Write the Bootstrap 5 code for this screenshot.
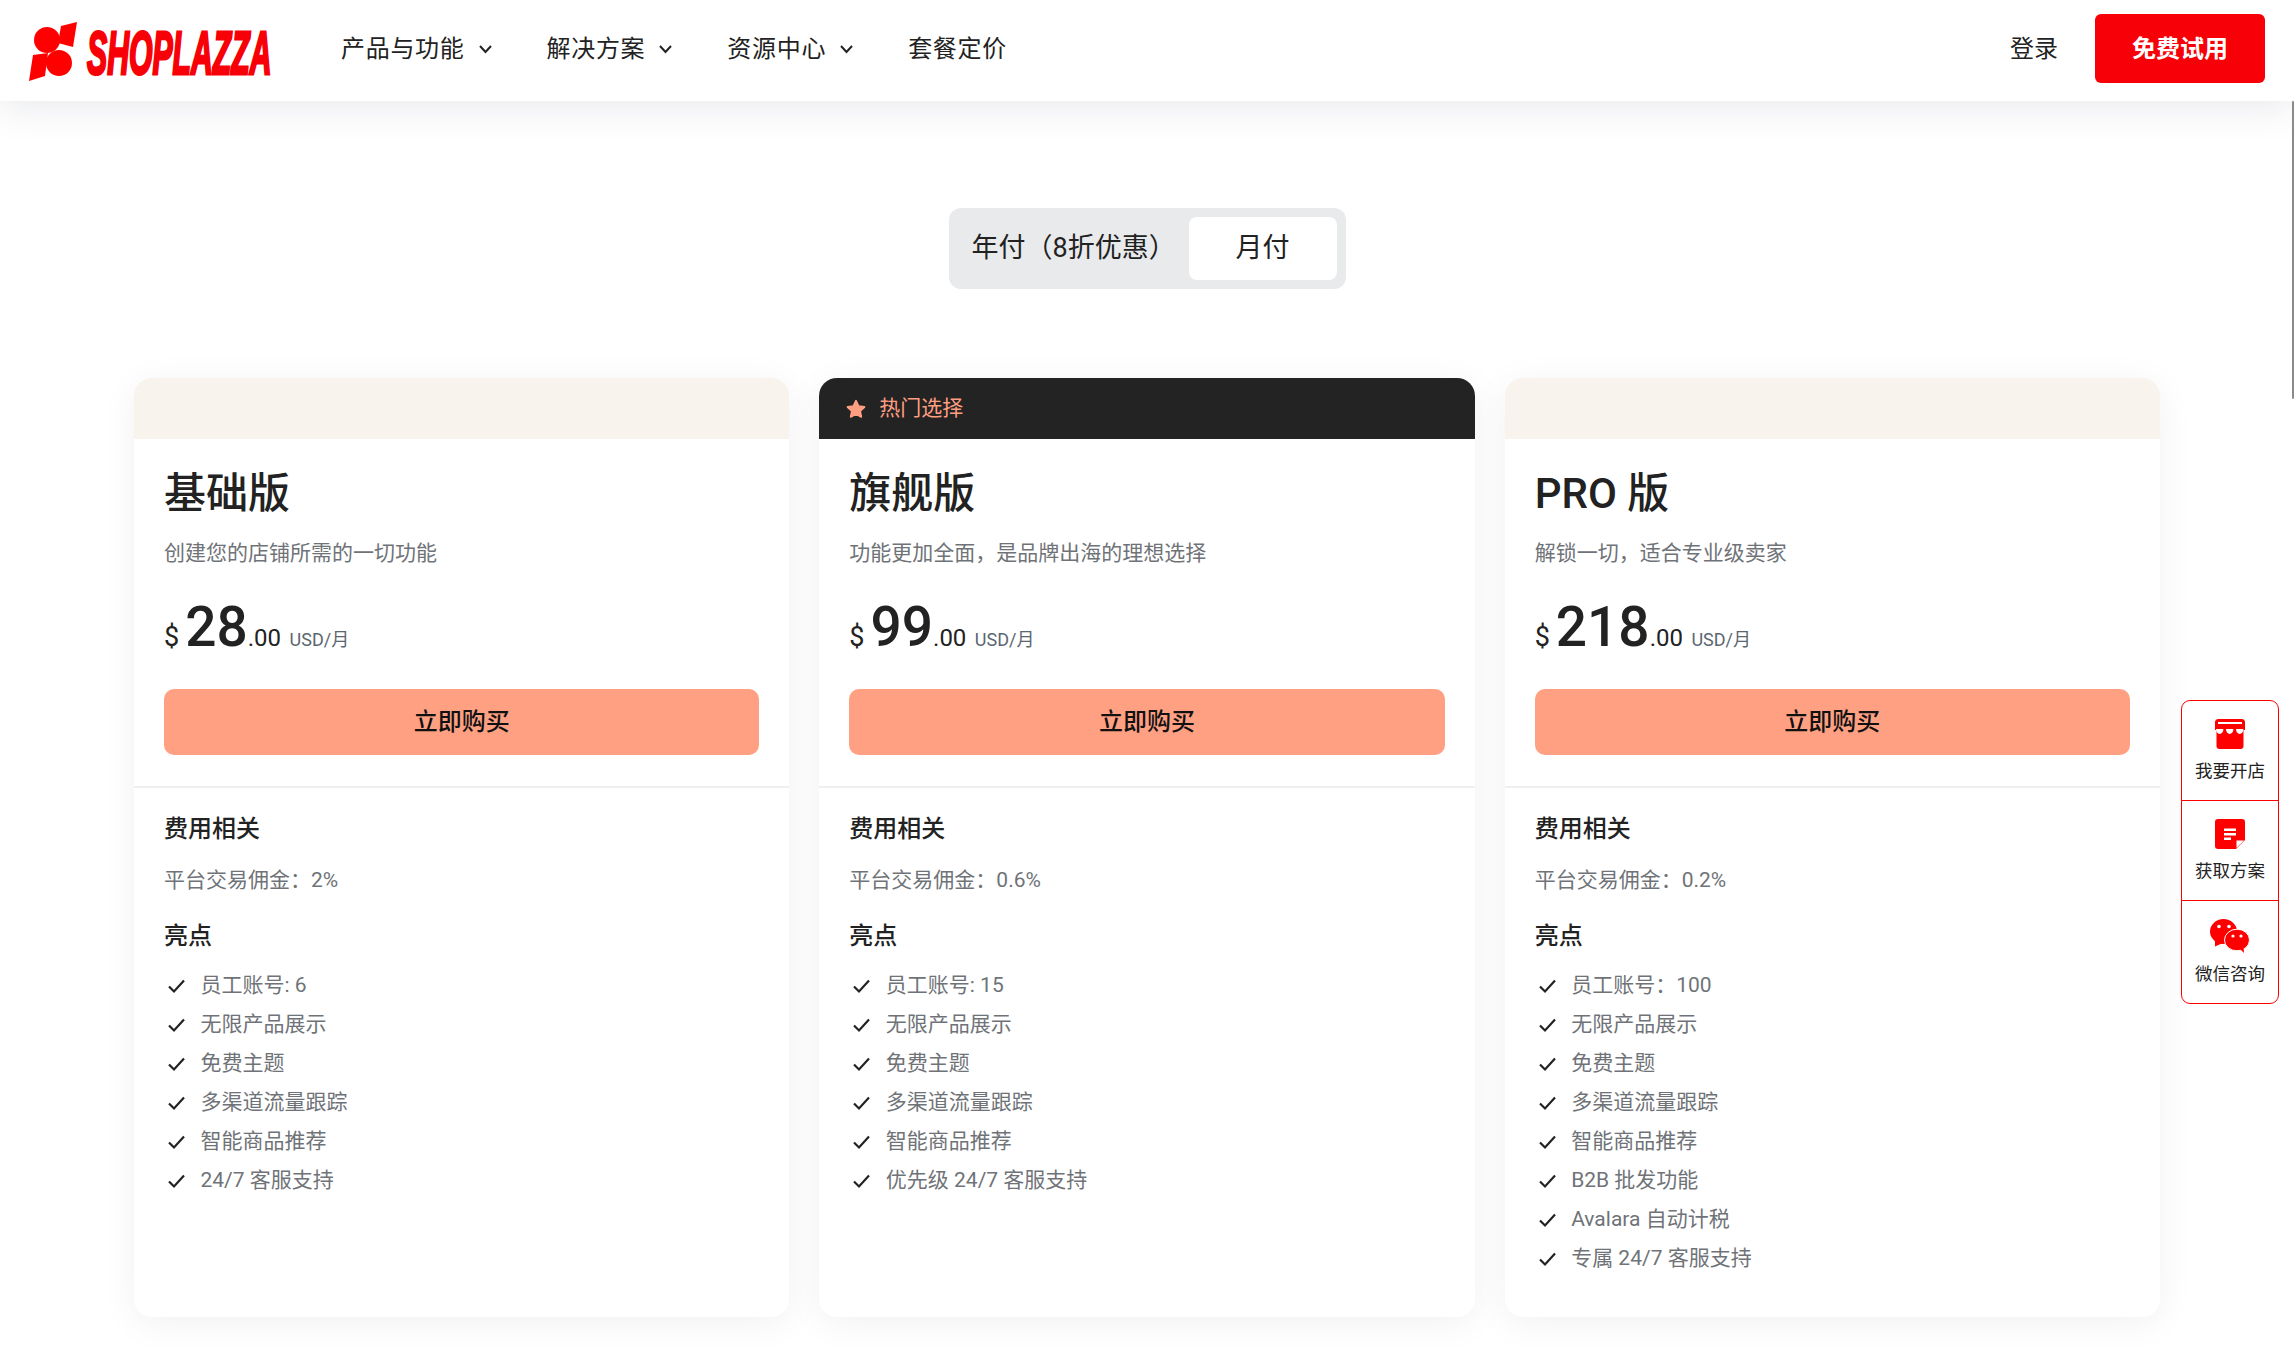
<!DOCTYPE html>
<html lang="zh-CN">

<head>
    <meta charset="UTF-8" />
    <meta name="viewport" content="width=device-width, initial-scale=1" />
    <title>套餐定价 | SHOPLAZZA</title>
    <link href="https://cdn.jsdelivr.net/npm/bootstrap@5.3.2/dist/css/bootstrap.min.css" rel="stylesheet" />
    <style>
        :root {
            --brand-red: #f70007;
            --peach: #ffa083;
            --ink: #222222;
            --muted: #6f7378;
        }

        html,
        body {
            height: 1350px;
            overflow: hidden;
        }

        body {
            font-family: Roboto, "Noto Sans CJK SC", sans-serif;
            color: var(--ink);
            background: #fff;
        }

        .top-bar {
            height: 101px;
            padding: 0 29px 4px;
            background: #fff;
            box-shadow: 0 4px 40px rgba(40, 50, 80, 0.12);
            position: relative;
            z-index: 5;
        }

        .brand-svg {
            width: 244px;
            height: 60px;
            display: block;
            margin-top: 4px;
            overflow: visible;
        }

        .brand-word {
            font-family: "Liberation Sans", sans-serif;
            font-weight: 700;
            font-style: italic;
            font-size: 62px;
            fill: #f70007;
            stroke: #f70007;
            stroke-width: 3px;
        }

        .main-links {
            margin-left: 68px;
            gap: 54px;
        }

        .main-links .nav-link {
            color: var(--ink);
            font-size: 24px;
            letter-spacing: 0.7px;
            padding: 0;
            display: flex;
            align-items: center;
            gap: 13px;
        }

        .chev {
            width: 15px;
            height: 10px;
        }

        .login-link {
            color: var(--ink);
            font-size: 24px;
            text-decoration: none;
            margin-right: 37px;
        }

        .trial-btn {
            width: 170px;
            height: 69px;
            background: var(--brand-red);
            border: 0;
            border-radius: 6px;
            color: #fff;
            font-size: 24px;
            font-weight: 700;
        }

        .billing-wrap {
            padding-top: 107px;
        }

        .billing-switch {
            width: 397px;
            height: 81px;
            background: #e9eaec;
            border-radius: 12px;
            padding: 9px;
            font-size: 27px;
        }

        .billing-year {
            padding-left: 14px;
            width: 231px;
            white-space: nowrap;
        }

        .billing-month {
            width: 148px;
            height: 63px;
            background: #fff;
            border-radius: 8px;
        }

        .plans {
            width: 2026px;
            margin: 89px auto 0;
        }

        .plans .row {
            --bs-gutter-x: 30px;
        }

        .plan-card {
            height: 939px;
            border: 0;
            border-radius: 18px;
            overflow: hidden;
            box-shadow: 0 6px 36px rgba(0, 0, 0, 0.06);
        }

        .plan-head {
            height: 61px;
            padding: 0 26px;
            background: #f8f3ed;
            border: 0;
            border-radius: 0;
            font-size: 21px;
            display: flex;
            align-items: center;
            gap: 12px;
        }

        .plan-head.is-hot {
            background: #232323;
            color: #ff9e80;
        }

        .star-ico {
            width: 22px;
            height: 22px;
        }

        .plan-top {
            padding: 26px 30px 31px;
        }

        .plan-name {
            font-size: 42px;
            line-height: 58px;
            font-weight: 500;
            margin: 0;
        }

        .plan-desc {
            color: var(--muted);
            font-size: 21px;
            line-height: 30px;
            margin: 15px 0 0;
        }

        .price-line {
            margin-top: 23px;
            height: 72px;
            line-height: 72px;
            white-space: nowrap;
        }

        .price-cur {
            font-size: 27px;
            margin-right: 6px;
        }

        .price-big {
            font-size: 55px;
            font-weight: 500;
        }

        .price-cents {
            font-size: 24px;
        }

        .price-unit {
            font-size: 18px;
            color: #5b6670;
            margin-left: 8.5px;
        }

        .buy-btn {
            width: 100%;
            height: 66px;
            margin-top: 26px;
            background: var(--peach);
            border: 0;
            border-radius: 10px;
            color: #111;
            font-size: 24px;
            font-weight: 500;
        }

        .plan-rest {
            border-top: 2px solid #eeeff1;
            padding: 24px 30px 0;
        }

        .sect-title {
            font-size: 24px;
            line-height: 34px;
            font-weight: 500;
            margin: 0;
        }

        .fee-line {
            color: var(--muted);
            font-size: 21px;
            line-height: 30px;
            margin: 19px 0 24px;
        }

        .perk-list {
            list-style: none;
            margin: 13px 0 0;
            padding: 0;
        }

        .perk-list li {
            height: 39px;
            display: flex;
            align-items: center;
            gap: 14.5px;
            color: var(--muted);
            font-size: 21px;
            padding-left: 3px;
        }

        .tick {
            width: 19px;
            height: 16px;
            flex: none;
        }

        .side-dock {
            position: fixed;
            left: 2181px;
            top: 700px;
            width: 98px;
            background: #fff;
            border: 1px solid #ff0000;
            border-radius: 9px;
            z-index: 10;
        }

        .dock-item {
            height: 100px;
            font-size: 17.5px;
            color: var(--ink);
        }

        .dock-item:first-child {
            height: 99px;
        }

        .dock-item:last-child {
            height: 103px;
        }

        .dock-item+.dock-item {
            border-top: 1px solid #ff0000;
        }

        .dock-item svg {
            width: 40px;
            height: 34px;
        }

        .fake-scroll {
            position: fixed;
            right: 0;
            top: 101px;
            width: 2px;
            height: 298px;
            background: #8b8b8b;
            border-radius: 2px;
            z-index: 6;
        }
    </style>
</head>

<body>

    <!-- 顶部导航 -->
    <nav class="navbar top-bar d-flex align-items-center flex-nowrap">
        <a href="#" class="d-block">
            <svg class="brand-svg" viewBox="29 18 244 60" role="img" aria-label="SHOPLAZZA">
                <g fill="#ff0000">
                    <circle cx="47" cy="37" r="13" />
                    <circle cx="59" cy="60" r="13" />
                    <polygon points="61,23 77,19 73,44 58,40" />
                    <polygon points="33,52 48,50 45,73 29,78" />
                </g>
                <text class="brand-word" transform="translate(87 71) scale(0.487 1)">SHOPLAZZA</text>
            </svg>
        </a>
        <ul class="nav main-links flex-nowrap me-auto">
            <li class="nav-item"><a class="nav-link" href="#">产品与功能
                    <svg class="chev" viewBox="0 0 15 10"><path d="M2 2l5.5 6L13 2" fill="none" stroke="#222" stroke-width="2" /></svg></a></li>
            <li class="nav-item"><a class="nav-link" href="#">解决方案
                    <svg class="chev" viewBox="0 0 15 10"><path d="M2 2l5.5 6L13 2" fill="none" stroke="#222" stroke-width="2" /></svg></a></li>
            <li class="nav-item"><a class="nav-link" href="#">资源中心
                    <svg class="chev" viewBox="0 0 15 10"><path d="M2 2l5.5 6L13 2" fill="none" stroke="#222" stroke-width="2" /></svg></a></li>
            <li class="nav-item"><a class="nav-link" href="#">套餐定价</a></li>
        </ul>
        <a class="login-link" href="#">登录</a>
        <button class="btn trial-btn" type="button">免费试用</button>
    </nav>

    <!-- 年付 / 月付 -->
    <div class="billing-wrap d-flex justify-content-center">
        <div class="billing-switch d-flex align-items-center">
            <div class="billing-year">年付（8折优惠）</div>
            <div class="billing-month d-flex align-items-center justify-content-center">月付</div>
        </div>
    </div>

    <!-- 套餐 -->
    <div class="plans">
        <div class="row" id="planRow"></div>
    </div>

    <!-- 右侧悬浮 -->
    <div class="side-dock">
        <div class="dock-item d-flex flex-column align-items-center justify-content-end pb-3">
            <svg viewBox="0 0 40 34" class="mb-2">
                <path fill="#ff0000" d="M8 3h24a3 3 0 0 1 3 2.5V14H5V5.5A3 3 0 0 1 8 3zM6.5 14h27v16a3 3 0 0 1-3 3h-21a3 3 0 0 1-3-3z" />
                <rect x="8" y="6" width="24" height="2" fill="#fff" />
                <path fill="#fff" d="M6 13h7.4a3.7 5 0 0 1-7.4 0zM16 13h7.4a3.7 5 0 0 1-7.4 0zM26 13h7.4a3.7 5 0 0 1-7.4 0z" />
            </svg>
            <span>我要开店</span>
        </div>
        <div class="dock-item d-flex flex-column align-items-center justify-content-end pb-3">
            <svg viewBox="0 0 40 34" class="mb-2">
                <path fill="#ff0000" d="M8 3h24a3 3 0 0 1 3 3v18l-9 9H8a3 3 0 0 1-3-3V6a3 3 0 0 1 3-3z" />
                <path fill="#fff" d="M14 12.5h12v2.4H14zM14 17h12v2.4H14zM14 21.5h7v2.4h-7zM26.5 24.5h7.5l-7.5 7.5z" />
            </svg>
            <span>获取方案</span>
        </div>
        <div class="dock-item d-flex flex-column align-items-center justify-content-end pb-3">
            <svg viewBox="0 0 40 34" class="mb-2">
                <ellipse cx="13.5" cy="12.5" rx="13.5" ry="12.5" fill="#ff0000" />
                <path fill="#ff0000" d="M5 21l0 6.5 8-3.5z" />
                <circle cx="9" cy="7.5" r="1.8" fill="#fff" />
                <circle cx="19" cy="7.5" r="1.8" fill="#fff" />
                <ellipse cx="27" cy="21" rx="12.5" ry="10.8" fill="#ff0000" stroke="#fff" stroke-width="1" />
                <path fill="#ff0000" d="M30 30l4 4-.5-6z" />
                <circle cx="23" cy="17" r="1.6" fill="#fff" />
                <circle cx="31" cy="17" r="1.6" fill="#fff" />
            </svg>
            <span>微信咨询</span>
        </div>
    </div>

    <div class="fake-scroll"></div>

    <script src="https://cdn.jsdelivr.net/npm/bootstrap@5.3.2/dist/js/bootstrap.bundle.min.js"></script>
    <script>
        const plans = [
            {
                name: "基础版", desc: "创建您的店铺所需的一切功能", price: "28", fee: "2%",
                perks: ["员工账号: 6", "无限产品展示", "免费主题", "多渠道流量跟踪", "智能商品推荐", "24/7 客服支持"]
            },
            {
                name: "旗舰版", desc: "功能更加全面，是品牌出海的理想选择", price: "99", fee: "0.6%", hot: true,
                perks: ["员工账号: 15", "无限产品展示", "免费主题", "多渠道流量跟踪", "智能商品推荐", "优先级 24/7 客服支持"]
            },
            {
                name: "PRO 版", desc: "解锁一切，适合专业级卖家", price: "218", fee: "0.2%",
                perks: ["员工账号：100", "无限产品展示", "免费主题", "多渠道流量跟踪", "智能商品推荐", "B2B 批发功能", "Avalara 自动计税", "专属 24/7 客服支持"]
            }
        ];

        const tick = '<svg class="tick" viewBox="0 0 19 16"><path d="M2 8.5l5 5L17 2.5" fill="none" stroke="#222" stroke-width="2.2" /></svg>';
        const star = '<svg class="star-ico" viewBox="0 0 24 24"><path fill="#ff9e80" stroke="#ff9e80" stroke-width="2" stroke-linejoin="round" d="M12 3l2.8 6 6.4.8-4.7 4.4 1.2 6.4L12 17.4l-5.7 3.2 1.2-6.4-4.7-4.4 6.4-.8z" /></svg>';

        document.getElementById("planRow").innerHTML = plans.map((p) => `
            <div class="col-4">
                <div class="card plan-card">
                    <div class="card-header plan-head ${p.hot ? "is-hot" : ""}">${p.hot ? star + "<span>热门选择</span>" : ""}</div>
                    <div class="plan-top">
                        <h2 class="plan-name">${p.name}</h2>
                        <p class="plan-desc">${p.desc}</p>
                        <div class="price-line">
                            <span class="price-cur">$</span><span class="price-big">${p.price}</span><span class="price-cents">.00</span><span class="price-unit">USD/月</span>
                        </div>
                        <button class="btn buy-btn" type="button">立即购买</button>
                    </div>
                    <div class="plan-rest">
                        <h3 class="sect-title">费用相关</h3>
                        <p class="fee-line">平台交易佣金：${p.fee}</p>
                        <h3 class="sect-title">亮点</h3>
                        <ul class="perk-list">
                            ${p.perks.map((t) => `<li>${tick}<span>${t}</span></li>`).join("")}
                        </ul>
                    </div>
                </div>
            </div>`).join("");
    </script>
</body>

</html>
